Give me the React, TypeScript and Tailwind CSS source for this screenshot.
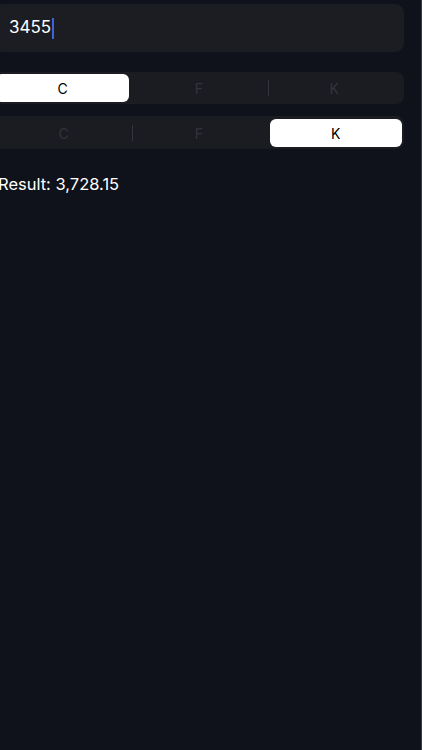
import React, { useState } from 'react';

const units = ['C', 'F', 'K'];

interface SegmentedProps {
  selected: number;
  tall?: boolean;
}

const Segmented: React.FC<SegmentedProps> = ({ selected, tall = false }) => {
  return (
    <div
      className={`flex items-stretch rounded-[8px] bg-[#1b1c22] p-[2px] ${
        tall ? 'h-[33px] pt-[3px]' : 'h-[32px]'
      }`}
    >
      {units.map((u, i) => {
        const active = i === selected;
        // divider only shows between two unselected segments
        const showDivider = i > 0 && i !== selected && i - 1 !== selected;
        const inset = i === 0 ? 'mr-[2px]' : i === units.length - 1 ? 'ml-[3px]' : 'mx-[2px]';
        return (
          <div key={u} className="relative flex flex-1 items-center justify-center">
            {showDivider && (
              <div className="absolute left-px top-[6px] bottom-[6px] w-px bg-[#34353c]" />
            )}
            <div
              className={`flex h-full items-center justify-center rounded-[6px] text-[14px] ${
                active ? `${inset} w-full bg-white text-black` : 'w-full text-[#33343b]'
              }`}
            >
              {u}
            </div>
          </div>
        );
      })}
    </div>
  );
};

export default function App() {
  const [value] = useState('3455');

  return (
    <div
      className="flex h-[750px] w-[422px] overflow-hidden border-r border-[#3a3d47] bg-[#0f121a]"
      style={{ fontFamily: 'Inter, "Noto Sans", sans-serif' }}
    >
      <div className="-ml-[6px] flex w-[410px] shrink-0 flex-col pt-[4px]">
        <div className="flex h-[48px] items-center rounded-[9px] bg-[#1c1d22] pl-[15px]">
          <span className="text-[17px] text-white">{value}</span>
          <span className="ml-[1px] h-[21px] w-[2px] bg-[#3b63e0]" />
        </div>

        <div className="mt-[20px]">
          <Segmented selected={0} />
        </div>
        <div className="mt-[12px]">
          <Segmented selected={2} tall />
        </div>

        <p className="mt-[24px] pl-[4px] text-[16.5px] leading-[22px] text-white">
          Result: 3,728.15
        </p>
      </div>
    </div>
  );
}
